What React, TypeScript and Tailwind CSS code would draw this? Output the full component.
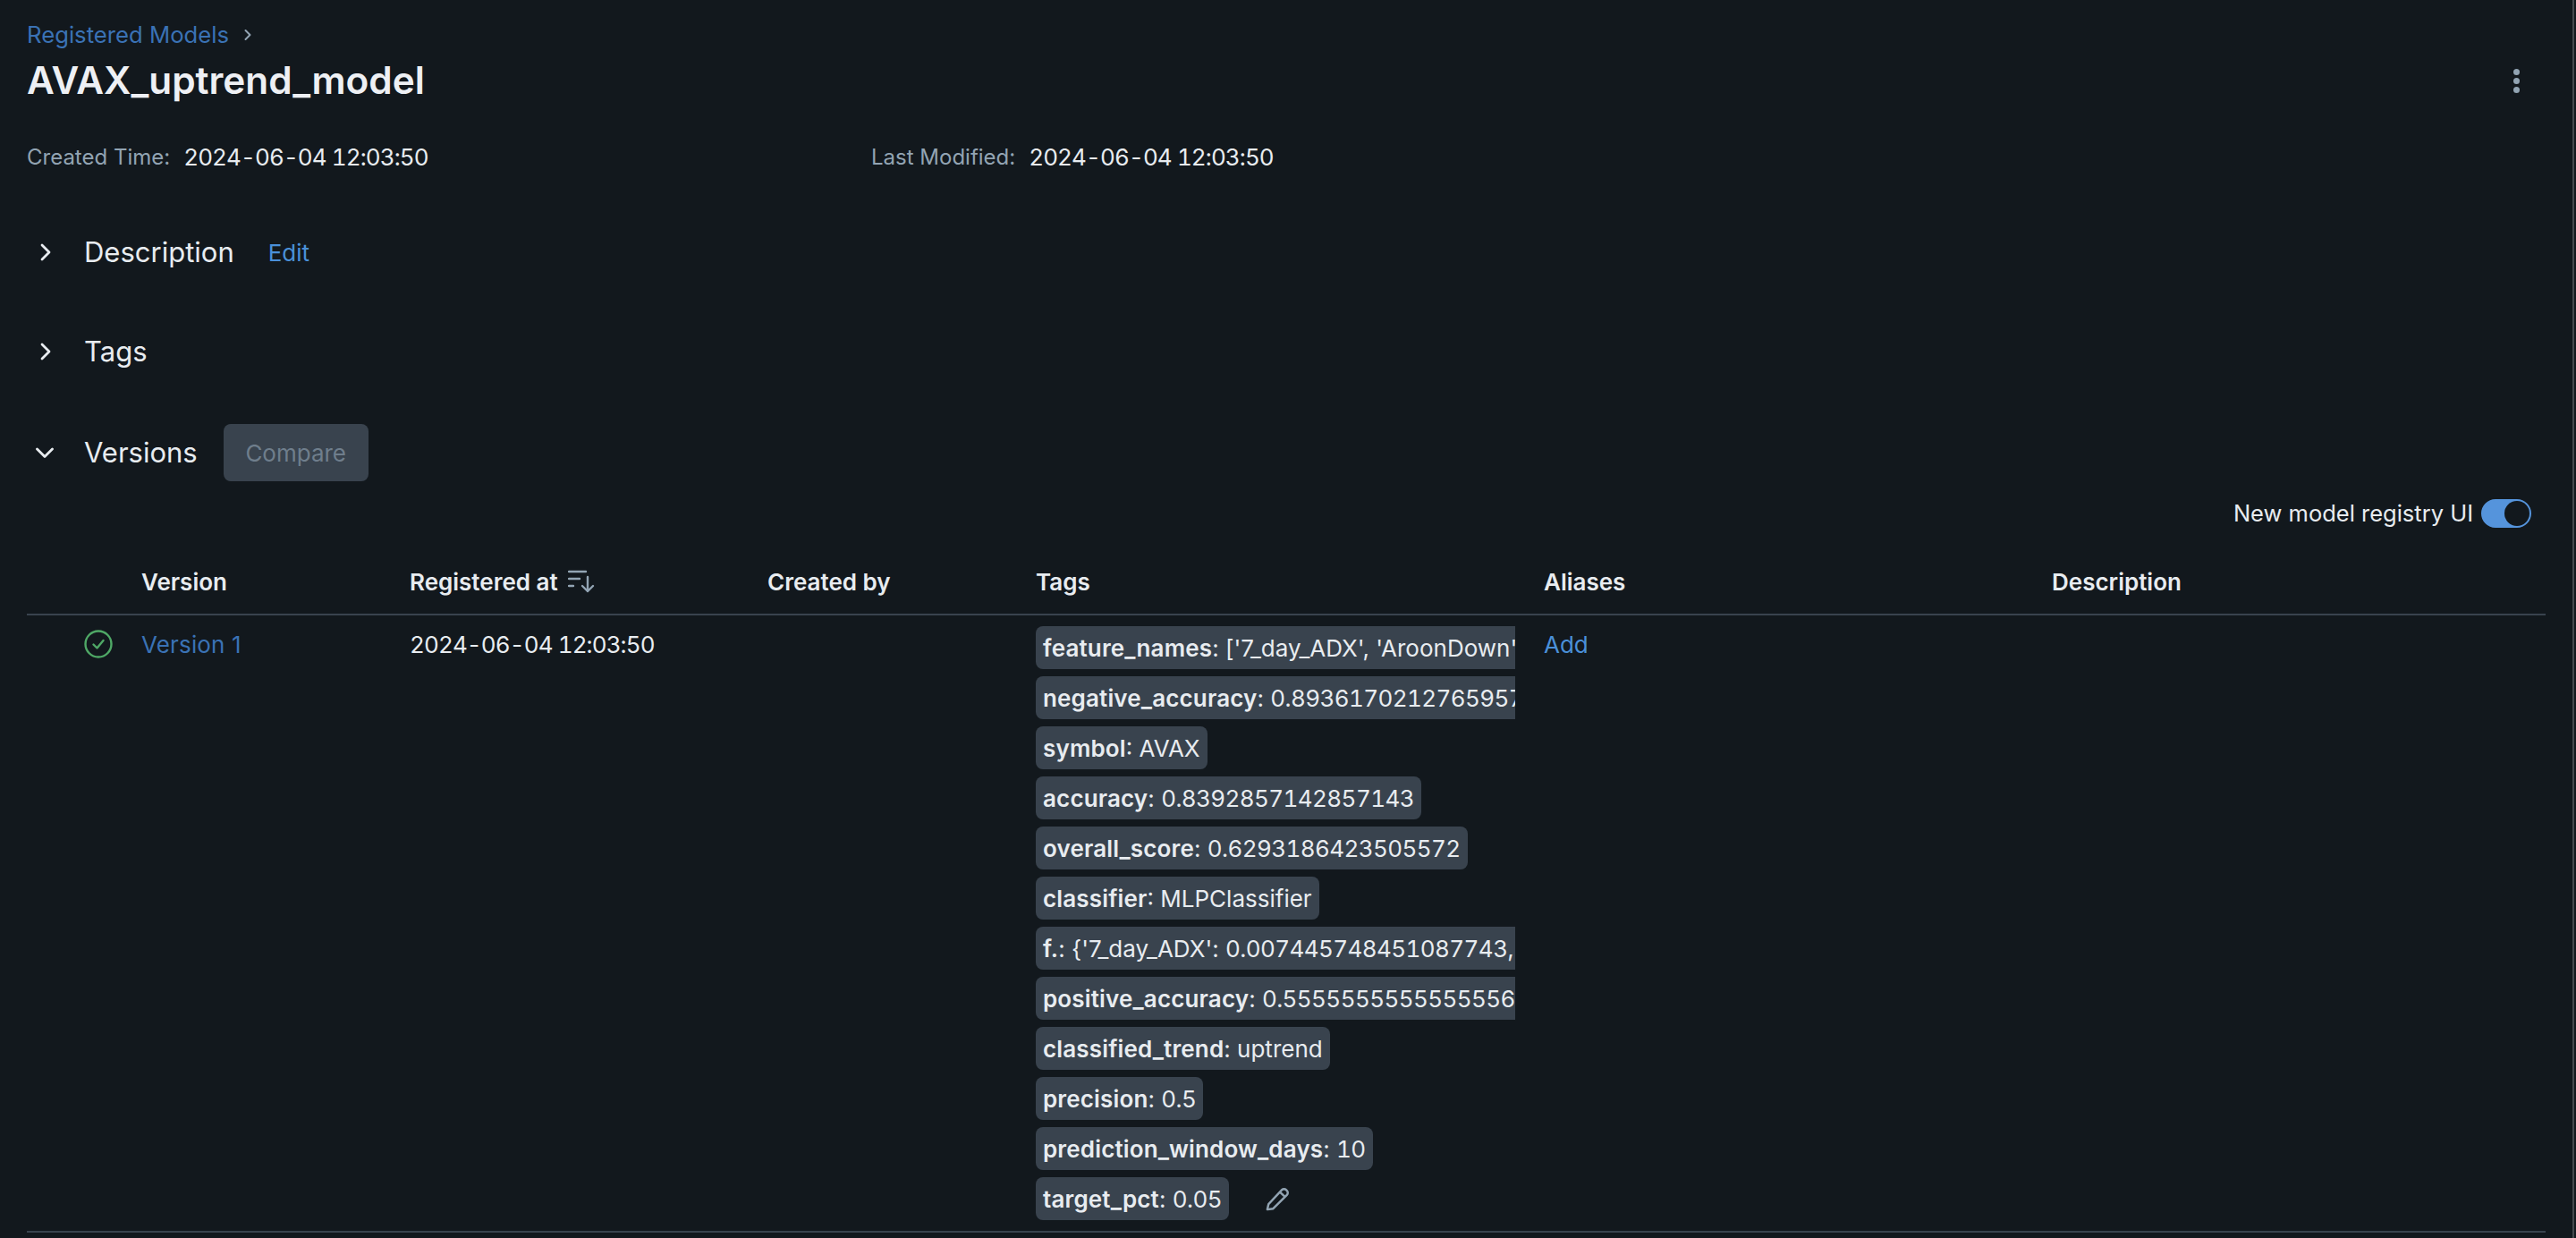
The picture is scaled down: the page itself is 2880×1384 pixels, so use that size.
import type { ReactNode } from "react";

function Num({ children }: { children: ReactNode }) {
  return <span className="tabular-nums tracking-[-0.9px]">{children}</span>;
}

function Val({ children }: { children: ReactNode }) {
  return <span className="tabular-nums tracking-[-0.6px]">{children}</span>;
}

const tags: { k: string; v: ReactNode; cut?: boolean }[] = [
  { k: "feature_names", v: "['7_day_ADX', 'AroonDown', 'AroonUp', 'MACD_signal']", cut: true },
  { k: "negative_accuracy", v: <Val>0.8936170212765957</Val>, cut: true },
  { k: "symbol", v: "AVAX" },
  { k: "accuracy", v: <Val>0.8392857142857143</Val> },
  { k: "overall_score", v: <Val>0.6293186423505572</Val> },
  { k: "classifier", v: "MLPClassifier" },
  { k: "f.", v: <>{"{'7_day_ADX': "}<Val>0.007445748451087743,</Val>{" 'AroonDown': 0.01}"}</>, cut: true },
  { k: "positive_accuracy", v: <Val>0.5555555555555556</Val>, cut: true },
  { k: "classified_trend", v: "uptrend" },
  { k: "precision", v: <Val>0.5</Val> },
  { k: "prediction_window_days", v: <Val>10</Val> },
  { k: "target_pct", v: <Val>0.05</Val> },
];

const columns = "grid-cols-[128px_300px_400px_300px_568px_568px_1fr]";

function Chevron({ open }: { open?: boolean }) {
  return (
    <svg width="20" height="20" viewBox="0 0 20 20" fill="none" stroke="#e8ecf0" strokeWidth="2.8" strokeLinecap="round" strokeLinejoin="round">
      {open ? <path d="M1.5 6l8.5 8.5L18.500 6" /> : <path d="M7 2l8 8-8 8" />}
    </svg>
  );
}

function SectionTitle({ children }: { children: string }) {
  return <span className="text-[31px] leading-[44px] text-[#e8ecf0]">{children}</span>;
}

function TagPill({ k, v, cut }: { k: string; v: ReactNode; cut?: boolean }) {
  return (
    <div className={`h-[48px] overflow-hidden whitespace-nowrap bg-[#39434e] pl-[8px] text-[26px] leading-[49px] text-[#e8ecf0] ${cut ? "w-[536px] rounded-l-[8px]" : "max-w-[536px] rounded-[8px] pr-[8px]"}`}>
      <span className="font-semibold tracking-[0.15px]">{k}</span>: {v}
    </div>
  );
}

export default function App() {
  return (
    <div className="relative h-[1384px] w-full overflow-hidden bg-[#12181d] pl-[30px] pr-[34px] font-['Inter',sans-serif] text-[26px] text-[#e8ecf0]">
      <span className="absolute bottom-0 right-[2px] top-0 w-[2px] bg-[#45494d]" />

      <div className="mt-[22px] flex h-[34px] items-center gap-[16px] text-[#3a72b5]">
        <span className="text-[25.700px]">Registered Models</span>
        <svg width="10" height="14" viewBox="0 0 10 14" fill="none" stroke="#92a4b3" strokeWidth="2" strokeLinecap="round" strokeLinejoin="round">
          <path d="M2.5 2l5 5-5 5" />
        </svg>
      </div>

      <div className="mt-[3px] flex h-[62px] items-center justify-between">
        <h1 className="text-[42.300px] font-semibold leading-[62px] text-[#eef0f4]">AVAX_uptrend_model</h1>
        <div className="mr-[29px] flex flex-col gap-[3px]">
          <span className="h-[7px] w-[7px] rounded-full bg-[#92a4b3]" />
          <span className="h-[7px] w-[7px] rounded-full bg-[#92a4b3]" />
          <span className="h-[7px] w-[7px] rounded-full bg-[#92a4b3]" />
        </div>
      </div>

      <div className="mt-[35px] grid h-[34px] grid-cols-[944px_1fr] items-center">
        <div className="flex items-center gap-[15px]">
          <span className="text-[24px] text-[#92a4b3]">Created Time:</span>
          <Num>2024-06-04 12:03:50</Num>
        </div>
        <div className="flex items-center gap-[15px]">
          <span className="text-[24px] text-[#92a4b3]">Last Modified:</span>
          <Num>2024-06-04 12:03:50</Num>
        </div>
      </div>

      <div className="mt-[70px] flex h-[44px] items-center">
        <div className="ml-[10px] w-[54px]"><Chevron /></div>
        <SectionTitle>Description</SectionTitle>
        <span className="ml-[38px] text-[#4a90d9]">Edit</span>
      </div>

      <div className="mt-[67px] flex h-[44px] items-center">
        <div className="ml-[10px] w-[54px]"><Chevron /></div>
        <SectionTitle>Tags</SectionTitle>
      </div>

      <div className="mt-[59px] flex h-[64px] items-center">
        <div className="ml-[10px] w-[54px]"><Chevron open /></div>
        <SectionTitle>Versions</SectionTitle>
        <button className="ml-[29px] h-[64px] w-[162px] rounded-[8px] bg-[#39434e] text-[26px] text-[#6f7e8c]">Compare</button>
      </div>

      <div className="mt-[20px] flex h-[32px] items-center justify-end gap-[9px] pr-[16px]">
        <span className="text-[25.500px]">New model registry UI</span>
        <div className="flex h-[32px] w-[56px] items-center justify-end rounded-full border-2 border-[#5594dc] bg-[#5594dc]">
          <span className="h-[28px] w-[28px] rounded-full bg-[#12181d]" />
        </div>
      </div>

      <div className={`mt-[36px] grid h-[62px] ${columns} items-center border-b-2 border-[#39434e] pb-[12px] font-semibold`}>
        <span />
        <span>Version</span>
        <span className="flex items-center gap-[11px]">
          Registered at
          <svg width="32" height="28" viewBox="0 0 32 28" fill="none" stroke="#92a4b3" strokeWidth="2.4" strokeLinecap="round" strokeLinejoin="round">
            <path d="M1 3h19M1 11h12M1 19h5" />
            <path d="M22 9v16M16 19l6 6 6-6" />
          </svg>
        </span>
        <span>Created by</span>
        <span>Tags</span>
        <span>Aliases</span>
        <span>Description</span>
      </div>

      <div className={`grid ${columns} border-b-2 border-[#39434e] pb-[12px] pt-[12px]`}>
        <div className="flex h-[40px] items-center justify-end pr-[32px]">
          <svg width="32" height="32" viewBox="0 0 32 32" fill="none" stroke="#4fa866" strokeWidth="2.4" strokeLinecap="round" strokeLinejoin="round">
            <circle cx="16" cy="16" r="14.5" />
            <path d="M10.500 16.500l4 4 7-8.500" />
          </svg>
        </div>
        <div className="h-[40px] leading-[41px] tracking-[0.15px] text-[#3a72b5]">Version 1</div>
        <div className="h-[40px] leading-[41px]"><Num>2024-06-04 12:03:50</Num></div>
        <div />
        <div className="flex flex-col items-start gap-[8px]">
          {tags.map((t) => (
            <div key={t.k} className="flex items-center">
              <TagPill k={t.k} v={t.v} cut={t.cut} />
              {t.k === "target_pct" && (
                <svg className="ml-[41px]" width="28" height="28" viewBox="0 0 30 30" fill="none" stroke="#92a4b3" strokeWidth="2.6" strokeLinejoin="round">
                  <path d="M2 28l1.500-6.500L19.500 4.500a3.500 3.500 0 0 1 5 0l1 1a3.500 3.500 0 0 1 0 5L9 27z" />
                  <path d="M17 7l6.500 6" />
                </svg>
              )}
            </div>
          ))}
        </div>
        <div className="h-[40px] leading-[41px] text-[#4a90d9]">Add</div>
        <div />
      </div>
    </div>
  );
}
